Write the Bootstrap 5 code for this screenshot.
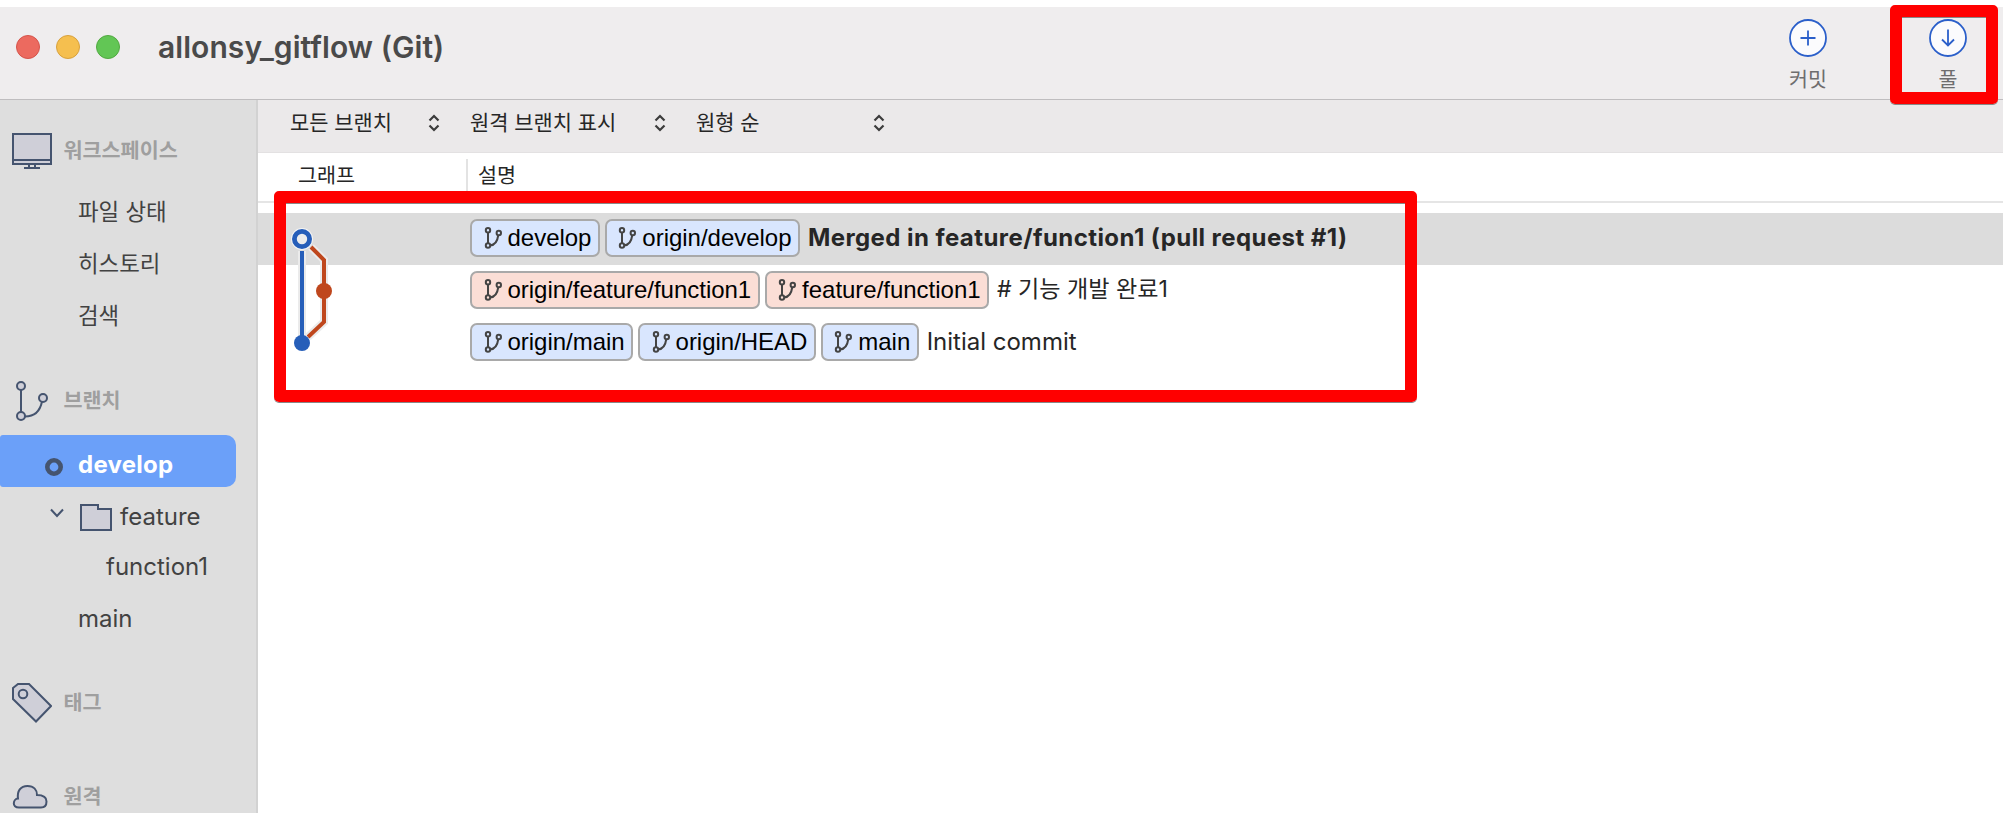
<!DOCTYPE html>
<html lang="ko">
<head>
  <meta charset="UTF-8" />
  <meta name="viewport" content="width=device-width, initial-scale=1.0"/>
  <title>allonsy_gitflow (Git)</title>
  <link href="https://cdn.jsdelivr.net/npm/bootstrap@5.3.2/dist/css/bootstrap.min.css" rel="stylesheet"/>
  <style>
    body {
      font-family: Inter, "Noto Sans CJK KR", sans-serif;
      font-size: 24px;
      line-height: 1;
      color: #262626;
      background-color: #fff;
    }
    /* Title bar */
    .title-bar {
      height: 93px;
      margin-top: 7px;
      padding: 0 36px 12px 16px;
      background-color: #efedee;
      border-bottom: 1px solid #bfbdbf;
    }
    .light {
      width: 24px;
      height: 24px;
      border: 1px solid;
    }
    .light-close { background-color: #ec6a5f; border-color: #d5544b; }
    .light-min { background-color: #f5bf4f; border-color: #d8a13d; }
    .light-max { background-color: #62c655; border-color: #52a941; }
    .window-title {
      margin: 0 0 0 38px;
      font-size: 30px;
      font-weight: 600;
      letter-spacing: .06px;
      color: #4a4a4a;
    }
    .tool-btn {
      width: 38px;
      padding-top: 15px;
      gap: 13px;
      font-size: 20.6px;
      color: #6e6d6e;
    }
    .tool-list { gap: 102px; }
    /* Sidebar */
    .side-panel {
      width: 258px;
      background-color: #dedede;
      border-right: 2px solid #d2d2d2;
      padding-top: 25px;
      color: #424242;
    }
    .side-panel svg { stroke: #45546f; fill: #cfcfd8; stroke-width: 2; flex: none; }
    .side-head {
      height: 52px;
      padding-left: 12px;
      gap: 11.5px;
      font-size: 20.7px;
      font-weight: 700;
      color: #9f9f9f;
      flex: none;
    }
    .side-item {
      height: 52px;
      padding-left: 78px;
      flex: none;
    }
    .side-ko { font-size: 22.4px; }
    .side-current {
      width: 236px;
      padding: 7px 0 0 45px;
      gap: 15px;
      font-weight: 700;
      letter-spacing: .25px;
      color: #fff;
      background-color: #6ba0f9;
      border-radius: 3px 10px 10px 3px;
    }
    .side-panel .ring { fill: none; stroke-width: 4.6; margin-top: 5px; }
    .side-folder { padding: 8px 0 0 50px; }
    .side-child { padding-left: 106px; margin-top: 2px; height: 51px; }
    .side-last { padding-top: 2px; }
    .gap-items { margin-top: 9px; }
    .gap-group { margin-top: 33px; }
    .gap-wide { margin-top: 42px; }
    /* History */
    .filter-bar {
      height: 53px;
      padding: 0 0 6px 32px;
      gap: 30px;
      background-color: #ebe9ea;
      border-bottom: 1px solid #e3e1e2;
      font-size: 20.9px;
    }
    .filter { width: 150px; }
    .filter-wide { width: 196px; }
    .filter-sort { width: 189px; }
    .filter svg { stroke: #3c3c3c; fill: none; stroke-width: 2.2; }
    .list-head {
      height: 50px;
      border-bottom: 2px solid #e5e5e5;
      font-size: 20.7px;
      padding-top: 6px;
    }
    .head-graph { width: 210px; padding: 0 0 7px 40px; border-right: 2px solid #e3e3e3; }
    .head-desc { padding: 0 0 7px 10px; }
    .commits { padding-top: 10px; }
    .commit { height: 52px; padding: 0 0 2px 212px; gap: 5px; }
    .commit-active { background-color: #dcdcdc; font-weight: 700; }
    .commit-active .msg { letter-spacing: .43px; }
    .msg { margin-left: 3px; }
    .msg-ko { font-size: 23.1px; }
    .ref {
      height: 38px;
      padding: 0 6.400px 0 11.500px;
      gap: 6px;
      border: 2px solid #a9a9a9;
      border-radius: 7px;
      background-color: #d9e6fe;
      color: #000;
      font: 400 24px/34px "Liberation Sans", sans-serif;
      letter-spacing: -.02px;
    }
    .ref-feature { background-color: #fbded6; }
    .ref svg { stroke: #444; fill: none; stroke-width: 2; }
    .graph { position: absolute; left: 30px; top: 20px; }
    /* Red highlight frames laid over the window */
    .frame {
      position: absolute;
      border: 12px solid #f00;
      border-radius: 5px;
      box-shadow: 0 1px 0 #888, inset 0 1px 0 #888;
    }
    .frame-history { left: 274px; top: 191px; width: 1143px; height: 211px; }
    .frame-pull { left: 1890px; top: 5px; width: 108px; height: 99px; }
  </style>
</head>
<body class="vh-100 d-flex flex-column overflow-hidden position-relative">
  <svg class="d-none">
    <symbol id="branch" viewBox="0 0 18 22">
      <path d="M4 5.500v11M6 18.500q7-.5 8.300-10.500"/>
      <circle cx="4" cy="3.300" r="2.200"/>
      <circle cx="4" cy="18.500" r="2.200"/>
      <circle cx="14.800" cy="6" r="2.200"/>
    </symbol>
    <symbol id="updown" viewBox="0 0 12 18">
      <path d="M1.500 6.500 6 2l4.500 4.500M1.500 11.500 6 16l4.500-4.500"/>
    </symbol>
  </svg>

  <!-- Title bar -->
  <header class="title-bar d-flex align-items-center flex-shrink-0">
    <div class="d-flex gap-3">
      <span class="light light-close rounded-circle"></span>
      <span class="light light-min rounded-circle"></span>
      <span class="light light-max rounded-circle"></span>
    </div>
    <h1 class="window-title">allonsy_gitflow (Git)</h1>
    <div class="tool-list d-flex ms-auto">
      <div class="tool-btn d-flex flex-column align-items-center">
        <svg width="38" height="38" fill="#fbfbfd" stroke="#2b5fca" stroke-width="1.800"><circle cx="19" cy="19" r="18"/><path d="M11.500 19h15M19 11.500v15"/></svg>
        <span>커밋</span>
      </div>
      <div class="tool-btn d-flex flex-column align-items-center">
        <svg width="38" height="38" fill="#fbfbfd" stroke="#2b5fca" stroke-width="1.800"><circle cx="19" cy="19" r="18"/><path d="M19 10.500v15.500M13 20.500l6 6 6-6" fill="none"/></svg>
        <span>풀</span>
      </div>
    </div>
  </header>

  <div class="d-flex flex-grow-1 overflow-hidden">
    <!-- Sidebar -->
    <nav class="side-panel d-flex flex-column flex-shrink-0 overflow-hidden">
      <div class="side-head d-flex align-items-center">
        <svg width="40" height="36"><path d="M1 1h38v30H1zM1 27h38M17 31v4M23 31v4M12 35h16"/></svg>
        <span>워크스페이스</span>
      </div>
      <div class="side-item side-ko gap-items d-flex align-items-center">파일 상태</div>
      <div class="side-item side-ko d-flex align-items-center">히스토리</div>
      <div class="side-item side-ko d-flex align-items-center">검색</div>

      <div class="side-head gap-group d-flex align-items-center">
        <svg width="40" height="40"><path d="M9 9v22" /><path d="M13 35.500q14 0 17-15" fill="none"/><circle cx="9" cy="5" r="4"/><circle cx="9" cy="35" r="4"/><circle cx="31" cy="17" r="4"/></svg>
        <span>브랜치</span>
      </div>
      <div class="side-item side-current mt-2 d-flex align-items-center">
        <svg class="ring" width="18" height="18"><circle cx="9" cy="9" r="6.700"/></svg>
        <span>develop</span>
      </div>
      <div class="side-item side-folder d-flex align-items-center">
        <svg class="mb-2 me-3" width="14" height="10"><path d="M1 1.500l6 6.500 6-6.500" fill="none"/></svg>
        <svg class="me-2" width="32" height="27"><path d="M1 1h17v4h13v21H1z"/></svg>
        <span>feature</span>
      </div>
      <div class="side-item side-child d-flex align-items-center">function1</div>
      <div class="side-item side-last d-flex align-items-center">main</div>

      <div class="side-head gap-group d-flex align-items-center">
        <svg width="40" height="40"><path d="M1 5l5-4h11l22 22-15 15.500L1 16z"/><circle cx="11" cy="11" r="4.300"/></svg>
        <span>태그</span>
      </div>
      <div class="side-head gap-wide d-flex align-items-center">
        <svg width="40" height="24"><path d="M7 22.500h22c3.500 0 5.500-2.500 5.500-6 0-4-3.500-6.500-9.500-6.500 0-5-3-9-9.500-9-7 0-10.500 5-9.500 12.500-5 .5-6.500 9 1 9z"/></svg>
        <span>원격</span>
      </div>
    </nav>

    <!-- History -->
    <main class="flex-grow-1">
      <div class="filter-bar d-flex align-items-center">
        <div class="filter d-flex align-items-center justify-content-between">
          <span>모든 브랜치</span><svg width="12" height="18"><use href="#updown"/></svg>
        </div>
        <div class="filter filter-wide d-flex align-items-center justify-content-between">
          <span>원격 브랜치 표시</span><svg width="12" height="18"><use href="#updown"/></svg>
        </div>
        <div class="filter filter-sort d-flex align-items-center justify-content-between">
          <span>원형 순</span><svg width="12" height="18"><use href="#updown"/></svg>
        </div>
      </div>
      <div class="list-head d-flex">
        <div class="head-graph d-flex align-items-center">그래프</div>
        <div class="head-desc d-flex align-items-center">설명</div>
      </div>

      <div class="commits position-relative">
        <div class="commit commit-active d-flex align-items-center">
          <span class="ref d-flex align-items-center"><svg width="18" height="22"><use href="#branch"/></svg>develop</span>
          <span class="ref d-flex align-items-center"><svg width="18" height="22"><use href="#branch"/></svg>origin/develop</span>
          <span class="msg">Merged in feature/function1 (pull request #1)</span>
        </div>
        <div class="commit d-flex align-items-center">
          <span class="ref ref-feature d-flex align-items-center"><svg width="18" height="22"><use href="#branch"/></svg>origin/feature/function1</span>
          <span class="ref ref-feature d-flex align-items-center"><svg width="18" height="22"><use href="#branch"/></svg>feature/function1</span>
          <span class="msg msg-ko"># 기능 개발 완료1</span>
        </div>
        <div class="commit d-flex align-items-center">
          <span class="ref d-flex align-items-center"><svg width="18" height="22"><use href="#branch"/></svg>origin/main</span>
          <span class="ref d-flex align-items-center"><svg width="18" height="22"><use href="#branch"/></svg>origin/HEAD</span>
          <span class="ref d-flex align-items-center"><svg width="18" height="22"><use href="#branch"/></svg>main</span>
          <span class="msg">Initial commit</span>
        </div>
        <!-- Commit graph -->
        <svg class="graph" width="50" height="136" fill="none" stroke-width="4">
          <path d="M14 28v92M23 24l13 13v62l-16 15" stroke="#ebebeb" stroke-width="8"/>
          <path d="M23 24l13 13v62l-16 15" stroke="#bf471d"/>
          <path d="M14 28v92" stroke="#265eb9"/>
          <circle cx="14" cy="16" r="11" fill="#f4f4f4"/>
          <circle cx="14" cy="16" r="7.600" fill="#ececec" stroke="#265eb9" stroke-width="4.800"/>
          <circle cx="36" cy="68" r="8" fill="#bf471d"/>
          <circle cx="14" cy="120" r="8" fill="#265eb9"/>
        </svg>
      </div>
    </main>
  </div>

  <div class="frame frame-history"></div>
  <div class="frame frame-pull"></div>

  <script src="https://cdn.jsdelivr.net/npm/bootstrap@5.3.2/dist/js/bootstrap.bundle.min.js"></script>
</body>
</html>
